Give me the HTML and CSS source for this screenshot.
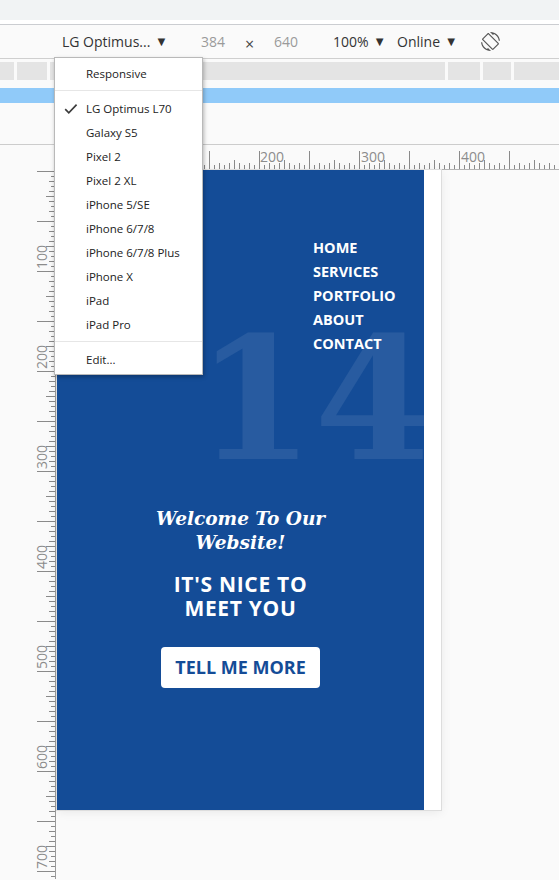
FILE: index.html
```html
<!DOCTYPE html>
<html>
<head>
<meta charset="utf-8">
<link rel="stylesheet" href="styles.css">
</head>
<body>
<div class="top-strip"></div>
<div class="toolbar">
  <span class="device-select">LG Optimus... <span class="caret">▼</span></span>
  <span class="dim">384</span>
  <span class="times">×</span>
  <span class="dim dim-h">640</span>
  <span class="zoom">100% <span class="caret">▼</span></span>
  <span class="throttle">Online <span class="caret">▼</span></span>
  <svg class="rotate" width="19" height="19" viewBox="0 0 24 24">
    <path fill="#555" d="M16.48 2.52c3.27 1.55 5.61 4.72 5.97 8.48h1.5C23.44 4.84 18.29 0 12 0l-.66.03 3.81 3.81 1.33-1.32zm-6.25-.77c-.59-.59-1.54-.59-2.12 0L1.750 8.11c-.59.59-.59 1.54 0 2.12l12.02 12.02c.59.59 1.54.59 2.12 0l6.36-6.36c.59-.59.59-1.54 0-2.12L10.23 1.75zm4.6 19.44L2.81 9.17l6.36-6.36 12.02 12.020-6.360 6.36zm-7.31.29C4.25 19.94 1.91 16.76 1.55 13H.05C.56 19.16 5.71 24 12 24l.66-.03-3.81-3.81-1.33 1.32z"/>
  </svg>
</div>
<div class="mq">
  <div class="mq-bars"><i></i><i></i><i></i><i></i><i></i><i></i></div>
  <div class="mq-blue"></div>
</div>
<div class="workspace">
  <div class="corner"></div>
  <svg class="ruler-top" width="502" height="25" viewBox="0 0 502 25">
    <defs>
      <pattern id="tp" x="2" y="0" width="50" height="25" patternUnits="userSpaceOnUse">
        <rect x="0" y="6" width="1" height="18" fill="#8a8a8a"/>
        <rect x="5" y="20" width="1" height="4" fill="#8a8a8a"/>
        <rect x="10" y="18" width="1" height="6" fill="#8a8a8a"/>
        <rect x="15" y="20" width="1" height="4" fill="#8a8a8a"/>
        <rect x="20" y="18" width="1" height="6" fill="#8a8a8a"/>
        <rect x="25" y="15" width="1" height="9" fill="#8a8a8a"/>
        <rect x="30" y="18" width="1" height="6" fill="#8a8a8a"/>
        <rect x="35" y="20" width="1" height="4" fill="#8a8a8a"/>
        <rect x="40" y="18" width="1" height="6" fill="#8a8a8a"/>
        <rect x="45" y="20" width="1" height="4" fill="#8a8a8a"/>
      </pattern>
    </defs>
    <rect width="502" height="24" fill="url(#tp)"/>
    <rect y="24" width="502" height="1" fill="#b5b5b5"/>
    <text class="rl" x="203" y="17">200</text>
    <text class="rl" x="304" y="17">300</text>
    <text class="rl" x="404" y="17">400</text>
  </svg>
  <svg class="ruler-left" width="57" height="709" viewBox="0 0 57 709">
    <defs>
      <pattern id="lp" x="0" y="1" width="57" height="50" patternUnits="userSpaceOnUse">
        <rect x="37" y="0" width="18" height="1" fill="#8a8a8a"/>
        <rect x="51" y="5" width="4" height="1" fill="#8a8a8a"/>
        <rect x="49" y="10" width="6" height="1" fill="#8a8a8a"/>
        <rect x="51" y="15" width="4" height="1" fill="#8a8a8a"/>
        <rect x="49" y="20" width="6" height="1" fill="#8a8a8a"/>
        <rect x="46" y="25" width="9" height="1" fill="#8a8a8a"/>
        <rect x="49" y="30" width="6" height="1" fill="#8a8a8a"/>
        <rect x="51" y="35" width="4" height="1" fill="#8a8a8a"/>
        <rect x="49" y="40" width="6" height="1" fill="#8a8a8a"/>
        <rect x="51" y="45" width="4" height="1" fill="#8a8a8a"/>
      </pattern>
    </defs>
    <rect width="55" height="709" fill="url(#lp)"/>
    <rect x="55" width="1" height="709" fill="#9a9a9a"/>
    <text class="rl" transform="translate(47 99) rotate(-90)">100</text>
    <text class="rl" transform="translate(47 199) rotate(-90)">200</text>
    <text class="rl" transform="translate(47 299) rotate(-90)">300</text>
    <text class="rl" transform="translate(47 399) rotate(-90)">400</text>
    <text class="rl" transform="translate(47 499) rotate(-90)">500</text>
    <text class="rl" transform="translate(47 599) rotate(-90)">600</text>
    <text class="rl" transform="translate(47 699) rotate(-90)">700</text>
  </svg>
  <div class="stage">
    <div class="device">
      <section class="hero">
        <div class="bg-number">14</div>
        <ul class="nav">
          <li>HOME</li>
          <li>SERVICES</li>
          <li>PORTFOLIO</li>
          <li>ABOUT</li>
          <li>CONTACT</li>
        </ul>
        <h3 class="welcome">Welcome To Our Website!</h3>
        <h1 class="nice">IT'S NICE TO MEET YOU</h1>
        <a class="btn">TELL ME MORE</a>
      </section>
      <div class="gutter"></div>
    </div>
  </div>
</div>
<div class="dropdown">
  <div class="item">Responsive</div>
  <div class="sep"></div>
  <div class="item checked">
    <svg class="check" width="14" height="12" viewBox="0 0 14 12"><path d="M1.2 6.2 L4.8 9.8 L12.6 1.6" fill="none" stroke="#3c3c3c" stroke-width="1.7"/></svg>
    LG Optimus L70</div>
  <div class="item">Galaxy S5</div>
  <div class="item">Pixel 2</div>
  <div class="item">Pixel 2 XL</div>
  <div class="item">iPhone 5/SE</div>
  <div class="item">iPhone 6/7/8</div>
  <div class="item">iPhone 6/7/8 Plus</div>
  <div class="item">iPhone X</div>
  <div class="item">iPad</div>
  <div class="item">iPad Pro</div>
  <div class="sep sep2"></div>
  <div class="item">Edit...</div>
</div>
</body>
</html>
```
FILE: styles.css
```css
html, body {
  margin: 0;
  padding: 0;
}
body {
  width: 559px;
  height: 880px;
  overflow: hidden;
  background: #fafafa;
  font-family: "Open Sans", "Noto Sans", sans-serif;
  position: relative;
}
.top-strip {
  height: 20px;
  background: #f1f3f4;
  border-bottom: 4px solid #ffffff;
}
.toolbar {
  height: 33px;
  border-top: 1px solid #cbcdd1;
  border-bottom: 1px solid #cfcfcf;
  background: #fafafa;
  display: flex;
  align-items: center;
  padding-left: 62px;
  font-size: 14px;
  color: #333;
  box-sizing: content-box;
}
.toolbar > span {
  white-space: nowrap;
}
.caret {
  font-size: 13px;
  position: relative;
  top: -1px;
  margin-left: 1px;
  color: #333;
}
.device-select { width: 139px; }
.dim { width: 44px; color: #9a9a9a; }
.times { width: 29px; font-size: 16px; color: #444; position: relative; top: 2px; }
.dim-h { width: 59px; }
.zoom { width: 64px; }
.throttle { width: 84px; }
.rotate { display: block; }

.mq {
  height: 86px;
  padding-top: 3px;
  box-sizing: border-box;
  border-bottom: 1px solid #cccccc;
}
.mq-bars {
  display: grid;
  grid-template-columns: 14px 30px 395px 32px 28px 1fr;
  column-gap: 3px;
  height: 18px;
}
.mq-bars i {
  background: #e4e4e4;
}
.mq-blue {
  margin-top: 8px;
  height: 15px;
  background: #90caf9;
}

.workspace {
  display: grid;
  grid-template-columns: 57px 502px;
  grid-template-rows: 25px 709px;
}
.corner {
  grid-column: 1;
  grid-row: 1;
}
.ruler-top {
  grid-column: 2;
  grid-row: 1;
  display: block;
}
.ruler-left {
  grid-column: 1;
  grid-row: 2;
  display: block;
}
.rl {
  font-family: "Open Sans", sans-serif;
  font-size: 14px;
  fill: #8c8c8c;
}
.stage {
  grid-column: 2;
  grid-row: 2;
}
.device {
  width: 384px;
  height: 640px;
  display: flex;
  background: #fff;
  box-shadow: 0 0 0 1px #dddddd, 0 2px 10px rgba(0,0,0,0.08);
}
.hero {
  width: 367px;
  height: 640px;
  background: #144c97;
  position: relative;
  overflow: hidden;
  box-sizing: border-box;
  padding-top: 66px;
  text-align: center;
  color: #fff;
}
.gutter {
  flex: 1;
  background: #fff;
}
.bg-number {
  position: absolute;
  left: 139px;
  top: 144px;
  font-family: "DejaVu Serif", serif;
  font-weight: 700;
  font-size: 170px;
  line-height: 170px;
  letter-spacing: 0;
  color: rgba(255,255,255,0.085);
}
.nav {
  list-style: none;
  margin: 0;
  padding: 0 0 0 256px;
  text-align: left;
  position: relative;
  font-family: "Open Sans", sans-serif;
  font-weight: 700;
  font-size: 14.5px;
  line-height: 24px;
}
.welcome {
  margin: 151px 0 0;
  font-family: "DejaVu Serif", serif;
  font-style: italic;
  font-weight: 700;
  font-size: 18.5px;
  line-height: 24px;
  padding: 0 80px;
  position: relative;
}
.nice {
  margin: 17px 0 0;
  font-family: "Open Sans", sans-serif;
  font-weight: 700;
  font-size: 21px;
  letter-spacing: 0.7px;
  line-height: 24px;
  padding: 0 100px;
  position: relative;
}
.btn {
  display: inline-block;
  margin-top: 27px;
  width: 159px;
  height: 41px;
  line-height: 41px;
  background: #fff;
  border-radius: 4px;
  color: #144c97;
  font-family: "Open Sans", sans-serif;
  font-weight: 700;
  font-size: 18px;
  position: relative;
}

.dropdown {
  position: absolute;
  left: 54px;
  top: 57px;
  width: 147px;
  background: #fff;
  border: 1px solid #b9b9b9;
  box-shadow: 1px 2px 4px rgba(0,0,0,0.28);
  padding: 4px 0 2px;
  font-family: "Open Sans", sans-serif;
  font-size: 11.5px;
  color: #222;
}
.item {
  height: 24px;
  line-height: 24px;
  padding-left: 31px;
  position: relative;
  white-space: nowrap;
}
.check {
  position: absolute;
  left: 9px;
  top: 6px;
}
.sep {
  height: 1px;
  background: #e6e6e6;
  margin: 4px 0 6px;
}
.sep2 {
  margin: 4px 0 6px;
}
```
